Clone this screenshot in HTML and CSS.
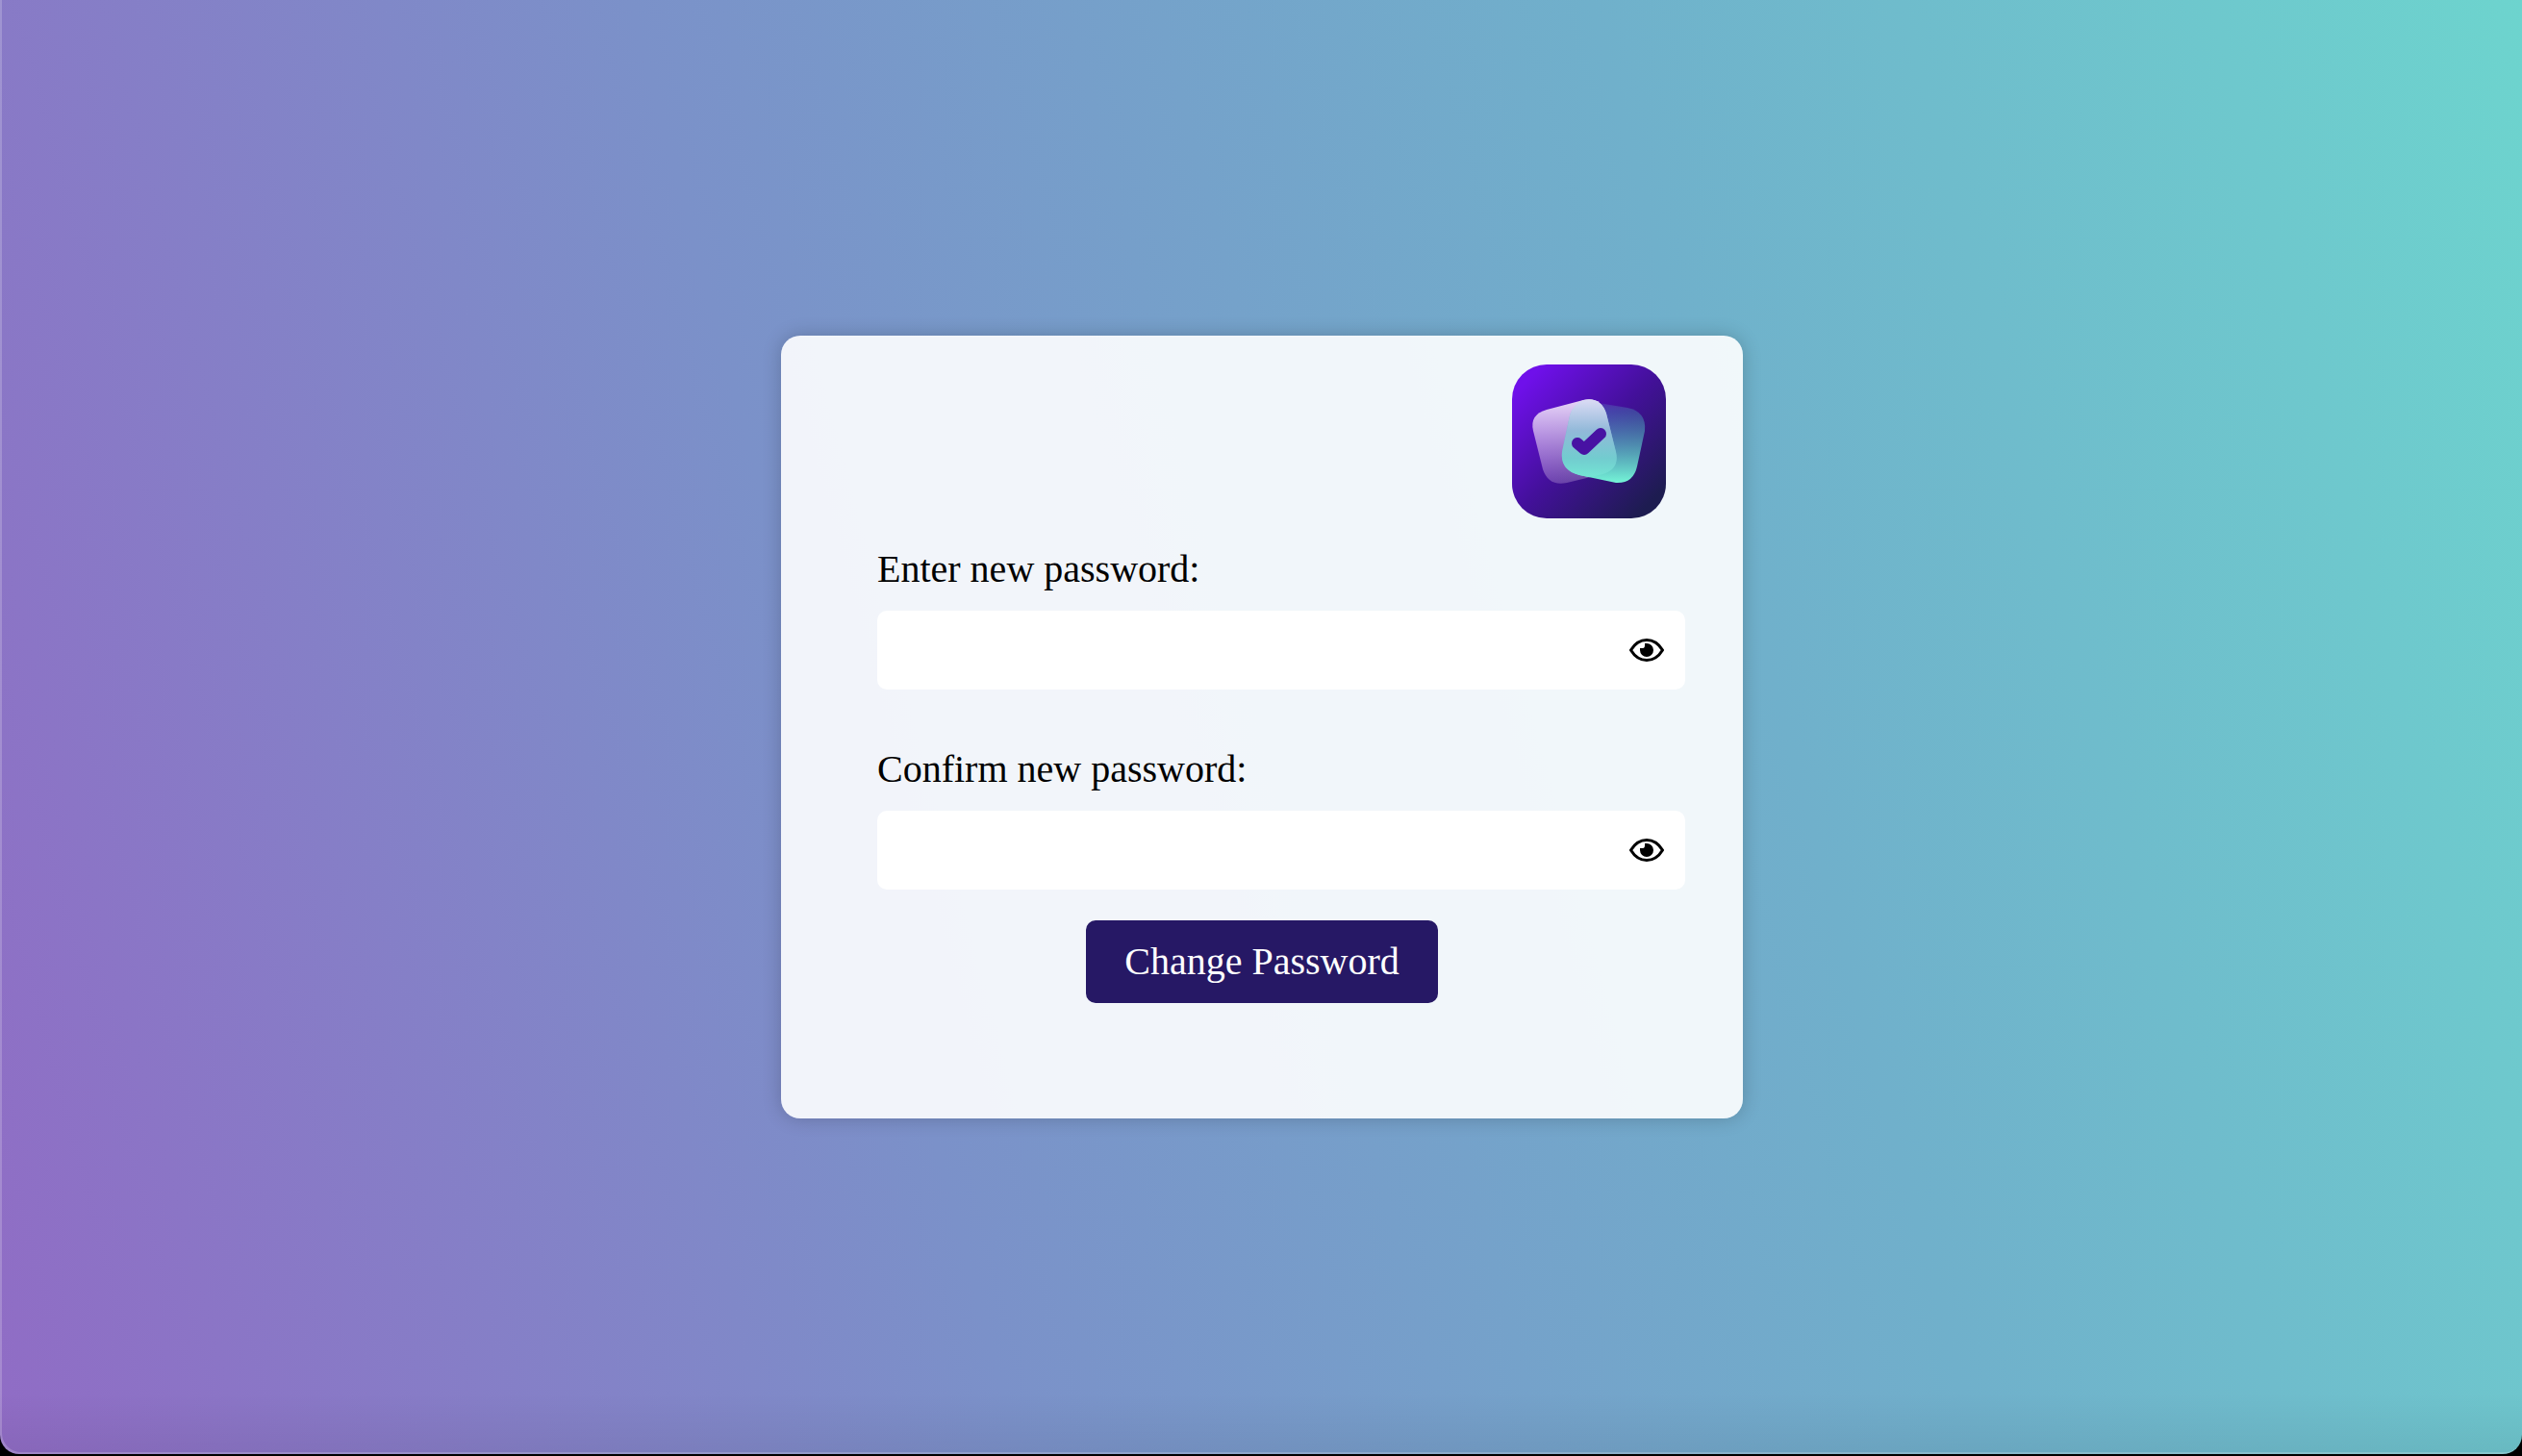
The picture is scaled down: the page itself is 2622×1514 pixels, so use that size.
FILE: index.html
```html
<!DOCTYPE html>
<html lang="en">
<head>
<meta charset="utf-8">
<meta name="viewport" content="width=device-width, initial-scale=1">
<title>Change Password</title>
<link rel="stylesheet" href="styles.css">
</head>
<body>
<main class="page">
  <form class="card">
    <svg class="logo" viewBox="0 0 160 160" aria-hidden="true">
      <defs>
        <linearGradient id="tile" x1="0.1" y1="0.1" x2="0.9" y2="0.9">
          <stop offset="0" stop-color="#6f10ea"/>
          <stop offset="0.5" stop-color="#43109a"/>
          <stop offset="1" stop-color="#1d1c50"/>
        </linearGradient>
        <linearGradient id="teal" gradientUnits="userSpaceOnUse" x1="0" y1="40" x2="0" y2="122">
          <stop offset="0" stop-color="#74f2d6" stop-opacity="0.1"/>
          <stop offset="0.1" stop-color="#45a0bd" stop-opacity="0.35"/>
          <stop offset="1" stop-color="#74f2d6"/>
        </linearGradient>
        <linearGradient id="lilac" gradientUnits="userSpaceOnUse" x1="0" y1="36" x2="0" y2="124">
          <stop offset="0" stop-color="#f0e2fa" stop-opacity="0.95"/>
          <stop offset="1" stop-color="#d8c0e8" stop-opacity="0.28"/>
        </linearGradient>
        <linearGradient id="overlap" gradientUnits="userSpaceOnUse" x1="0" y1="36" x2="0" y2="118">
          <stop offset="0" stop-color="#dcdcf5"/>
          <stop offset="0.4" stop-color="#92b9d9"/>
          <stop offset="0.75" stop-color="#72cccf"/>
          <stop offset="1" stop-color="#74e6d4"/>
        </linearGradient>
        <clipPath id="leftCard">
          <path d="M36 47L74 37Q92 33 98 51L108 91Q112 109 94 114L57 123Q38 127 32 109L22 69Q18 52 36 47Z"/>
        </clipPath>
      </defs>
      <rect width="160" height="160" rx="36" fill="url(#tile)"/>
      <path fill="url(#lilac)" d="M36 47L74 37Q92 33 98 51L108 91Q112 109 94 114L57 123Q38 127 32 109L22 69Q18 52 36 47Z"/>
      <path fill="url(#teal)" d="M84 39L120 45Q140 49 138 69L130 106Q126 124 108 123L70 115Q50 110 52 91L60 53Q66 36 84 39Z"/>
      <path clip-path="url(#leftCard)" fill="url(#overlap)" d="M84 33L120 45Q140 49 138 69L130 106Q126 124 108 123L70 115Q50 110 52 91L60 53Q64 38 84 33Z"/>
      <path d="M68 82L75 88L92 72" fill="none" stroke="#4812a3" stroke-width="12" stroke-linecap="round" stroke-linejoin="round"/>
    </svg>

    <div class="field">
      <label for="new-password">Enter new password:</label>
      <div class="password">
        <input id="new-password" type="password" autocomplete="new-password">
        <button class="reveal" type="button" aria-label="Show new password">
          <svg viewBox="0 0 36 24"><path class="lid" d="M1.5 12C10-2 26-2 34.5 12C26 26 10 26 1.5 12Z"/><path d="M18 5A7 7 0 1 1 11 12V10H14Q16 10 16 7V5Z"/></svg>
        </button>
      </div>
    </div>

    <div class="field">
      <label for="confirm-password">Confirm new password:</label>
      <div class="password">
        <input id="confirm-password" type="password" autocomplete="new-password">
        <button class="reveal" type="button" aria-label="Show confirmed password">
          <svg viewBox="0 0 36 24"><path class="lid" d="M1.5 12C10-2 26-2 34.5 12C26 26 10 26 1.5 12Z"/><path d="M18 5A7 7 0 1 1 11 12V10H14Q16 10 16 7V5Z"/></svg>
        </button>
      </div>
    </div>

    <button class="submit" type="submit">Change Password</button>
  </form>
</main>
</body>
</html>
```
FILE: styles.css
```css
* {
  box-sizing: border-box;
}

body {
  margin: 0;
  padding-bottom: 2px;
  min-height: 100vh;
  display: flex;
  background: #000;
  font-family: "Times New Roman", "Liberation Serif", serif;
  font-size: 40px;
  line-height: 46px;
  color: #000;
}

.page {
  flex: 1;
  display: flex;
  align-items: center;
  justify-content: center;
  padding: 0 0 1px 2px;
  border-radius: 0 0 20px 20px;
  background:
    linear-gradient(to top, rgba(0, 0, 0, 0.06), transparent 64px),
    linear-gradient(75deg, #906cc5, #7b91c9 35%, #70b0cb 68%, #6dd4ce);
  box-shadow: inset 2px -2px 0 rgba(255, 255, 255, 0.2);
}

.card {
  width: 100%;
  max-width: 1000px;
  padding: 30px 60px 120px 100px;
  display: flex;
  flex-direction: column;
  border-radius: 20px;
  background: rgba(255, 255, 255, 0.9);
  box-shadow: 0 0 20px rgba(0, 0, 0, 0.2);
}

.logo {
  width: 160px;
  height: 160px;
  align-self: flex-end;
  margin: 0 20px 30px 0;
}

.field {
  display: flex;
  flex-direction: column;
  gap: 20px;
}

.field + .field {
  margin-top: 60px;
}

.password {
  height: 82px;
  display: flex;
  align-items: center;
  padding-right: 22px;
  border-radius: 10px;
  background: #fff;
}

.password input {
  flex: 1;
  min-width: 0;
  height: 100%;
  padding: 0 20px;
  border: 0;
  outline: 0;
  background: transparent;
  font: inherit;
}

.reveal {
  padding: 0;
  border: 0;
  background: none;
  display: flex;
}

.reveal svg {
  width: 36px;
  height: 24px;
}

.lid {
  fill: none;
  stroke: #000;
  stroke-width: 3;
  stroke-linejoin: round;
}

.submit {
  align-self: center;
  margin: 32px 40px 0 0;
  padding: 20px 40px;
  border: 0;
  border-radius: 10px;
  background: #261865;
  color: #fff;
  font: inherit;
}
```
